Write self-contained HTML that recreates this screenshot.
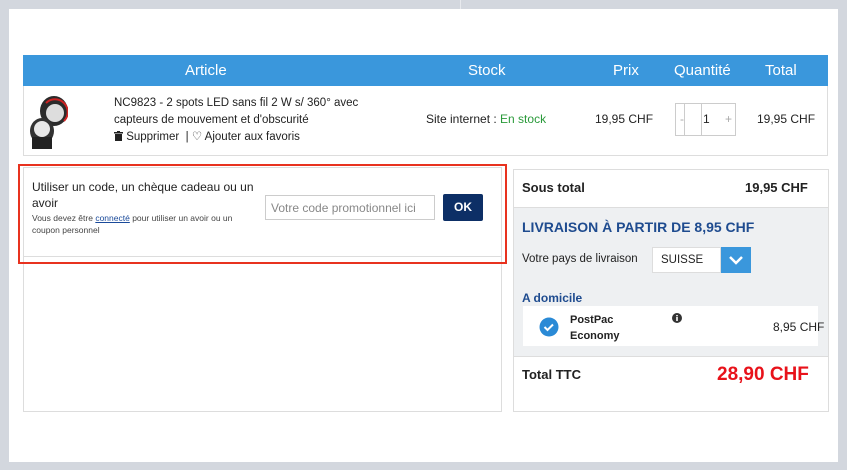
<!DOCTYPE html>
<html><head><meta charset="utf-8"><style>
*{box-sizing:border-box;margin:0;padding:0}
body{width:847px;height:470px;background:#d3d7de;font-family:"Liberation Sans",sans-serif;position:relative;overflow:hidden;color:#222}
.a{position:absolute}
</style></head><body>
<div class="a" style="left:460px;top:0;width:1px;height:9px;background:#e8eaee"></div>
<div class="a" style="left:9px;top:9px;width:829px;height:453px;background:#fff"></div>
<!-- table -->
<div class="a" style="left:23px;top:55px;width:805px;height:101px;border:1px solid #ddd;border-top:none"></div>
<div class="a" style="left:23px;top:55px;width:805px;height:31px;background:#3a97dc;color:#fff;font-size:15px">
 <span class="a" style="left:162px;top:7px">Article</span>
 <span class="a" style="left:445px;top:7px">Stock</span>
 <span class="a" style="left:590px;top:7px">Prix</span>
 <span class="a" style="left:651px;top:7px">Quantité</span>
 <span class="a" style="left:742px;top:7px">Total</span>
</div>
<svg class="a" style="left:28px;top:89px" width="40" height="62">
 <ellipse cx="26" cy="22" rx="14" ry="15" fill="#2b2b2b"/><circle cx="27" cy="24" r="9" fill="#ddd"/>
 <ellipse cx="14" cy="42" rx="12" ry="13" fill="#333"/><circle cx="14" cy="40" r="8" fill="#e8e8e8"/>
 <rect x="4" y="48" width="20" height="12" fill="#222"/>
 <path d="M18 14 A12 12 0 0 1 36 32" stroke="#c22" stroke-width="2" fill="none"/>
</svg>
<div class="a" style="left:114px;top:95px;font-size:11.5px;line-height:17px;color:#222;width:260px">NC9823 - 2 spots LED sans fil 2 W s/ 360° avec capteurs de mouvement et d'obscurité<br><svg width="9" height="10" style="vertical-align:-1px"><rect x="0" y="1" width="9" height="1.5" fill="#222"/><rect x="3" y="0" width="3" height="1.5" fill="#222"/><rect x="1" y="3" width="7" height="7" fill="#222"/></svg> Supprimer &nbsp;| ♡ Ajouter aux favoris</div>
<div class="a" style="left:426px;top:112px;font-size:12px">Site internet : <span style="color:#2a9a3a">En stock</span></div>
<div class="a" style="left:595px;top:112px;font-size:12px">19,95 CHF</div>
<div class="a" style="left:675px;top:103px;width:61px;height:33px;border:1px solid #ccc;font-size:12px">
 <span class="a" style="left:4px;top:8px;color:#aaa">-</span>
 <div class="a" style="left:8px;top:0;width:18px;height:31px;border-left:1px solid #ccc;border-right:1px solid #ccc"></div>
 <span class="a" style="left:27px;top:8px">1</span>
 <span class="a" style="left:49px;top:8px;color:#aaa">+</span>
</div>
<div class="a" style="left:757px;top:112px;font-size:12px">19,95 CHF</div>
<!-- left box -->
<div class="a" style="left:23px;top:167px;width:479px;height:245px;border:1px solid #ddd"></div>
<div class="a" style="left:23px;top:256px;width:479px;height:1px;background:#ddd"></div>
<div class="a" style="left:18px;top:164px;width:489px;height:100px;border:2px solid #e8321f"></div>
<div class="a" style="left:32px;top:179px;font-size:12px;line-height:16px;width:230px">Utiliser un code, un chèque cadeau ou un avoir</div>
<div class="a" style="left:32px;top:212px;font-size:8.5px;line-height:12px;color:#444;width:228px">Vous devez être <span style="color:#1a4a9a;text-decoration:underline">connecté</span> pour utiliser un avoir ou un coupon personnel</div>
<div class="a" style="left:265px;top:195px;width:170px;height:25px;border:1px solid #ccc;font-size:12px;color:#888;padding:5px 5px">Votre code promotionnel ici</div>
<div class="a" style="left:443px;top:194px;width:40px;height:27px;background:#0d2f66;color:#fff;font-weight:bold;font-size:12px;text-align:center;line-height:27px;border-radius:2px">OK</div>
<!-- right box -->
<div class="a" style="left:513px;top:169px;width:316px;height:243px;border:1px solid #ddd"></div>
<div class="a" style="left:514px;top:207px;width:314px;height:150px;background:#eef0f2;border-top:1px solid #ddd;border-bottom:1px solid #ddd"></div>
<div class="a" style="left:522px;top:180px;font-size:13px;font-weight:bold">Sous total</div>
<div class="a" style="left:745px;top:180px;font-size:13px;font-weight:bold">19,95 CHF</div>
<div class="a" style="left:522px;top:219px;font-size:14px;font-weight:bold;color:#1e4b8f">LIVRAISON À PARTIR DE 8,95 CHF</div>
<div class="a" style="left:522px;top:253px;font-size:11.5px">Votre pays de livraison</div>
<div class="a" style="left:652px;top:247px;width:69px;height:26px;background:#fff;border:1px solid #ddd;font-size:11.5px;padding:6px 8px">SUISSE</div>
<div class="a" style="left:721px;top:247px;width:30px;height:26px;background:#3a97dc"><svg width="30" height="26"><path d="M9 10 L15 16 L21 10" stroke="#fff" stroke-width="2.5" fill="none"/></svg></div>
<div class="a" style="left:522px;top:291px;font-size:12px;font-weight:bold;color:#1e4b8f">A domicile</div>
<div class="a" style="left:523px;top:306px;width:295px;height:40px;background:#fff"></div>
<svg class="a" style="left:539px;top:317px" width="20" height="20"><circle cx="10" cy="10" r="9.5" fill="#2a8ad6"/><path d="M5.5 10 L8.5 13 L14 7.5" stroke="#fff" stroke-width="2" fill="none"/></svg>
<div class="a" style="left:570px;top:312px;font-size:11px;line-height:16px;font-weight:bold">PostPac<br>Economy</div>
<svg class="a" style="left:672px;top:313px" width="10" height="10"><circle cx="5" cy="5" r="5" fill="#333"/><rect x="4.2" y="4" width="1.6" height="4" fill="#fff"/><rect x="4.2" y="2" width="1.6" height="1.3" fill="#fff"/></svg>
<div class="a" style="left:773px;top:320px;font-size:12px">8,95 CHF</div>
<div class="a" style="left:522px;top:367px;font-size:13px;font-weight:bold">Total TTC</div>
<div class="a" style="left:717px;top:364px;font-size:19px;font-weight:bold;color:#e8121a">28,90 CHF</div>
</body></html>
